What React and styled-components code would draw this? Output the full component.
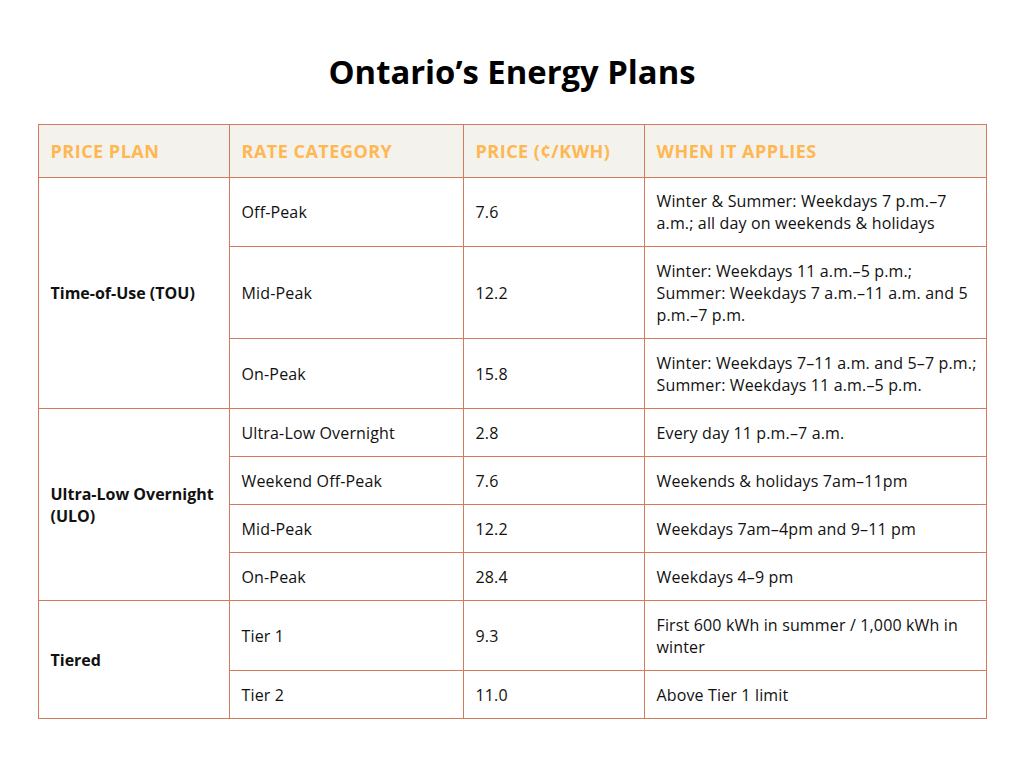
import React from "react";
import styled, { createGlobalStyle } from "styled-components";

const GlobalStyle = createGlobalStyle`
  html, body {
    margin: 0;
    padding: 0;
    background: #ffffff;
  }
  body {
    font-family: "Open Sans", "Liberation Sans", sans-serif;
    color: #111111;
  }
`;

const Page = styled.div`
  width: 1024px;
  height: 768px;
  display: flex;
  flex-direction: column;
  align-items: center;
`;

const Title = styled.h1`
  margin: 52px 0 0 0;
  height: 72px;
  font-size: 32.8px;
  font-weight: 700;
  line-height: 40px;
  color: #000000;
`;

const Table = styled.table`
  border-collapse: collapse;
  table-layout: fixed;
  width: 948px;

  td, th {
    border: 1px solid #d47a5c;
    padding: 0 12px;
    vertical-align: middle;
    text-align: left;
  }
  td:last-child {
    padding-right: 8px;
  }
`;

const HeadCell = styled.th`
  background: #f3f2ed;
  color: #ffb752;
  font-size: 18px;
  font-weight: 700;
  height: 52px;
  letter-spacing: 0.5px;
`;

const Row = styled.tr`
  height: ${(p) => p.$h}px;
`;

const Cell = styled.td`
  font-size: 16px;
  line-height: 22px;
  font-weight: ${(p) => (p.$bold ? 700 : 400)};
  letter-spacing: ${(p) => (p.$bold ? "0" : "0.15px")};
  color: #111111;
`;

const rows = [
  { plan: "Time-of-Use (TOU)", span: 3, cat: "Off-Peak", price: "7.6", when: "Winter & Summer: Weekdays 7 p.m.–7 a.m.; all day on weekends & holidays", h: 69 },
  { cat: "Mid-Peak", price: "12.2", when: "Winter: Weekdays 11 a.m.–5 p.m.; Summer: Weekdays 7 a.m.–11 a.m. and 5 p.m.–7 p.m.", h: 92 },
  { cat: "On-Peak", price: "15.8", when: "Winter: Weekdays 7–11 a.m. and 5–7 p.m.; Summer: Weekdays 11 a.m.–5 p.m.", h: 70 },
  { plan: "Ultra-Low Overnight (ULO)", span: 4, cat: "Ultra-Low Overnight", price: "2.8", when: "Every day 11 p.m.–7 a.m.", h: 48 },
  { cat: "Weekend Off-Peak", price: "7.6", when: "Weekends & holidays 7am–11pm", h: 48 },
  { cat: "Mid-Peak", price: "12.2", when: "Weekdays 7am–4pm and 9–11 pm", h: 48 },
  { cat: "On-Peak", price: "28.4", when: "Weekdays 4–9 pm", h: 48 },
  { plan: "Tiered", span: 2, cat: "Tier 1", price: "9.3", when: "First 600 kWh in summer / 1,000 kWh in winter", h: 70 },
  { cat: "Tier 2", price: "11.0", when: "Above Tier 1 limit", h: 48 },
];

export default function App() {
  return (
    <>
      <GlobalStyle />
      <Page>
        <Title>Ontario’s Energy Plans</Title>
        <Table>
          <colgroup>
            <col style={{ width: 191 }} />
            <col style={{ width: 234 }} />
            <col style={{ width: 181 }} />
            <col style={{ width: 342 }} />
          </colgroup>
          <thead>
            <tr>
              <HeadCell>PRICE PLAN</HeadCell>
              <HeadCell>RATE CATEGORY</HeadCell>
              <HeadCell>PRICE (¢/KWH)</HeadCell>
              <HeadCell>WHEN IT APPLIES</HeadCell>
            </tr>
          </thead>
          <tbody>
            {rows.map((r, i) => (
              <Row key={i} $h={r.h}>
                {r.plan && (
                  <Cell $bold rowSpan={r.span}>
                    {r.plan}
                  </Cell>
                )}
                <Cell>{r.cat}</Cell>
                <Cell>{r.price}</Cell>
                <Cell>{r.when}</Cell>
              </Row>
            ))}
          </tbody>
        </Table>
      </Page>
    </>
  );
}
